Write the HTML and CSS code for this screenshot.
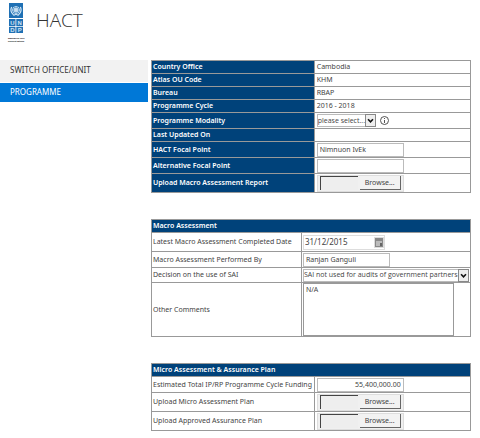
FILE: index.html
```html
<!DOCTYPE html>
<html lang="en">
<head>
<meta charset="utf-8">
<title>HACT</title>
<link rel="stylesheet" href="styles.css">
</head>
<body>
<header class="top">
  <svg class="logo" viewBox="0 0 18 42" role="img" aria-label="UNDP">
    <path fill="#1f70b4" d="M1 0h14v15H1zM1 16h6.500v7H1zM8.300 16H15v7H8.300zM1 23.800h6.500V30H1zM8.300 23.800H15V30H8.300z"/>
    <g fill="none" stroke="#d5e8f6" stroke-width=".8">
      <circle cx="8" cy="7" r="3.500"/>
      <circle cx="8" cy="7" r="1.600"/>
      <path d="M4.500 7h7M8 3.500v7M5.500 4.500l5 5M10.500 4.500l-5 5"/>
      <path stroke-width="1.200" d="M3.600 4Q1.500 8.500 5.500 11.700M12.400 4Q14.500 8.500 10.500 11.700M5.500 12.500Q8 10.500 10.500 12.500"/>
    </g>
    <g class="logo-letters"><text x="4.300" y="22">U</text><text x="11.700" y="22">N</text><text x="4.300" y="29">D</text><text x="11.700" y="29">P</text></g>
    <g class="logo-motto"><text x="0" y="36">Empowered lives.</text><text x="0" y="39">Resilient nations.</text></g>
  </svg>
  <h1>HACT</h1>
</header>
<div class="layout">
  <nav class="side">
    <a href="#">SWITCH OFFICE/UNIT</a>
    <a href="#" class="active" aria-current="page">PROGRAMME</a>
  </nav>
  <main>
    <table class="wide-label">
      <tr><th>Country Office</th><td>Cambodia</td></tr>
      <tr><th>Atlas OU Code</th><td>KHM</td></tr>
      <tr><th>Bureau</th><td>RBAP</td></tr>
      <tr><th>Programme Cycle</th><td>2016 - 2018</td></tr>
      <tr class="mid"><th><label for="modality">Programme Modality</label></th><td>
        <div class="line"><span class="pick short"><select id="modality"><option>please select...</option></select><svg viewBox="0 0 11 12"><path d="M2.500 4.500l3 3 3-3"/></svg></span>
        <svg class="info" viewBox="0 0 9 9"><circle cx="4.500" cy="4.500" r="4"/><path d="M4.500 4v3M4.500 2v1"/></svg></div></td></tr>
      <tr><th>Last Updated On</th><td></td></tr>
      <tr class="mid"><th><label for="focal">HACT Focal Point</label></th><td><input class="field" id="focal" value="Nimnuon IvEk"></td></tr>
      <tr class="mid"><th><label for="alt">Alternative Focal Point</label></th><td><input class="field" id="alt"></td></tr>
      <tr class="tall"><th><label for="macro-file">Upload Macro Assessment Report</label></th><td><div class="upload"><input id="macro-file" readonly><button type="button">Browse...</button></div></td></tr>
    </table>

    <table class="narrow-label">
      <tr><th colspan="2">Macro Assessment</th></tr>
      <tr class="tall"><td><label for="date">Latest Macro Assessment Completed Date</label></td><td>
        <div class="date"><input id="date" value="31/12/2015"><button type="button" aria-label="Pick a date"><svg viewBox="0 0 8 9"><path fill="#888" d="M0 0h8v9H0z"/><path fill="#bbb" d="M1 3h6v5H1z"/><path fill="#666" d="M5 5h2v3H5z"/></svg></button></div></td></tr>
      <tr class="mid"><td><label for="by">Macro Assessment Performed By</label></td><td><input class="field" id="by" value="Ranjan Ganguli"></td></tr>
      <tr class="sel"><td><label for="sai">Decision on the use of SAI</label></td><td><span class="pick"><select id="sai"><option>SAI not used for audits of government partners</option></select><svg viewBox="0 0 11 12"><path d="M2.500 4.500l3 3 3-3"/></svg></span></td></tr>
      <tr><td><label for="comments">Other Comments</label></td><td><textarea id="comments">N/A</textarea></td></tr>
    </table>

    <table class="wide-label">
      <tr><th colspan="2">Micro Assessment &amp; Assurance Plan</th></tr>
      <tr class="mid"><td><label for="funding">Estimated Total IP/RP Programme Cycle Funding</label></td><td><input class="field amount" id="funding" value="55,400,000.00"></td></tr>
      <tr class="tall"><td><label for="micro-file">Upload Micro Assessment Plan</label></td><td><div class="upload"><input id="micro-file" readonly><button type="button">Browse...</button></div></td></tr>
      <tr class="tall"><td><label for="plan-file">Upload Approved Assurance Plan</label></td><td><div class="upload"><input id="plan-file" readonly><button type="button">Browse...</button></div></td></tr>
    </table>
  </main>
</div>
</body>
</html>
```
FILE: styles.css
```css
* { box-sizing: border-box; }
body {
  margin: 0;
  background: #fff;
  color: #444;
  font: 7px/10px "Noto Sans", "Open Sans", sans-serif;
}
input, select, textarea, button { font: inherit; color: inherit; margin: 0; border-radius: 0; }

.top { display: flex; gap: 10px; padding: 3px 8px 0; height: 60px; }
.logo { width: 18px; height: 42px; overflow: visible; }
.logo-letters { font: bold 6px "Liberation Sans", sans-serif; fill: #cfe4f5; text-anchor: middle; }
.logo-motto { font: bold 2px "Liberation Sans", sans-serif; fill: #000; }
h1 { margin: 3px 0 0; font: 300 19px/28px "Open Sans", sans-serif; color: #333; }

.layout { display: grid; grid-template-columns: 148px minmax(0, 1fr); gap: 3px; padding-right: 9px; }
.side { display: flex; flex-direction: column; gap: 1px; }
.side a {
  padding: 4px 10px 6px;
  background: #f2f2f2;
  color: #333;
  font-size: 8px;
  line-height: 12px;
  text-decoration: none;
}
.side a.active { padding: 3px 10px 4px; background: #0078d7; color: #fff; }

main { display: flex; flex-direction: column; gap: 26px; }
table { width: 100%; border-collapse: collapse; table-layout: auto; }
th, td { height: 13px; padding: 0 1px; border: 1px solid #999; text-align: left; vertical-align: middle; }
th { background: #00427a; color: #fff; font-weight: 600; }
td:last-child { padding: 0 2px; }
.wide-label td:last-child { width: 49%; }
.narrow-label td:last-child { width: 53%; padding: 0 1px; }
.mid > * { height: 16px; }
.sel > * { height: 15px; }
.tall > * { height: 19px; }

.field { display: block; width: 87px; height: 14px; padding: 0 2px; border: 1px solid #bbb; background: #fff; }
.amount { text-align: right; }
.line { display: flex; align-items: center; gap: 4px; }
.pick { display: flex; position: relative; width: 100%; }
.short { width: 59px; }
.pick select { width: 100%; height: 13px; padding: 0 10px 0 0; border: 1px solid #bbb; background: #fff; font-family: "Open Sans", sans-serif; appearance: none; text-overflow: clip; }
.pick svg { position: absolute; right: 0; top: 0; width: 11px; height: 13px; background: #eee; border: 1px solid #888; fill: none; stroke: #111; stroke-width: 2; pointer-events: none; }
.info { width: 9px; height: 9px; fill: none; stroke: #555; stroke-width: 1; }

.upload { display: flex; align-items: center; gap: 2px; width: 87px; height: 17px; padding: 0 2px; background: #f0f0f0; border: 1px solid #ddd; }
.upload input { flex: 1; min-width: 0; height: 14px; border: 0 solid #444; border-width: 1px 0 0 1px; background: #eee; }
.upload button { width: 41px; height: 14px; padding: 0; background: #f2f2f2; border: 0 solid #666; border-width: 0 1px 1px 0; }

.date { display: flex; align-items: center; width: 82px; height: 15px; border: 1px solid #ddd; }
.date input { flex: 1; min-width: 0; padding: 0 1px; border: 0; font-size: 8px; }
.date button { display: flex; padding: 1px; border: 0; background: #ddd; }
.date svg { width: 8px; height: 9px; }
textarea { display: block; width: 151px; height: 53px; padding: 1px 2px; border: 1px solid #999; resize: none; }
```
